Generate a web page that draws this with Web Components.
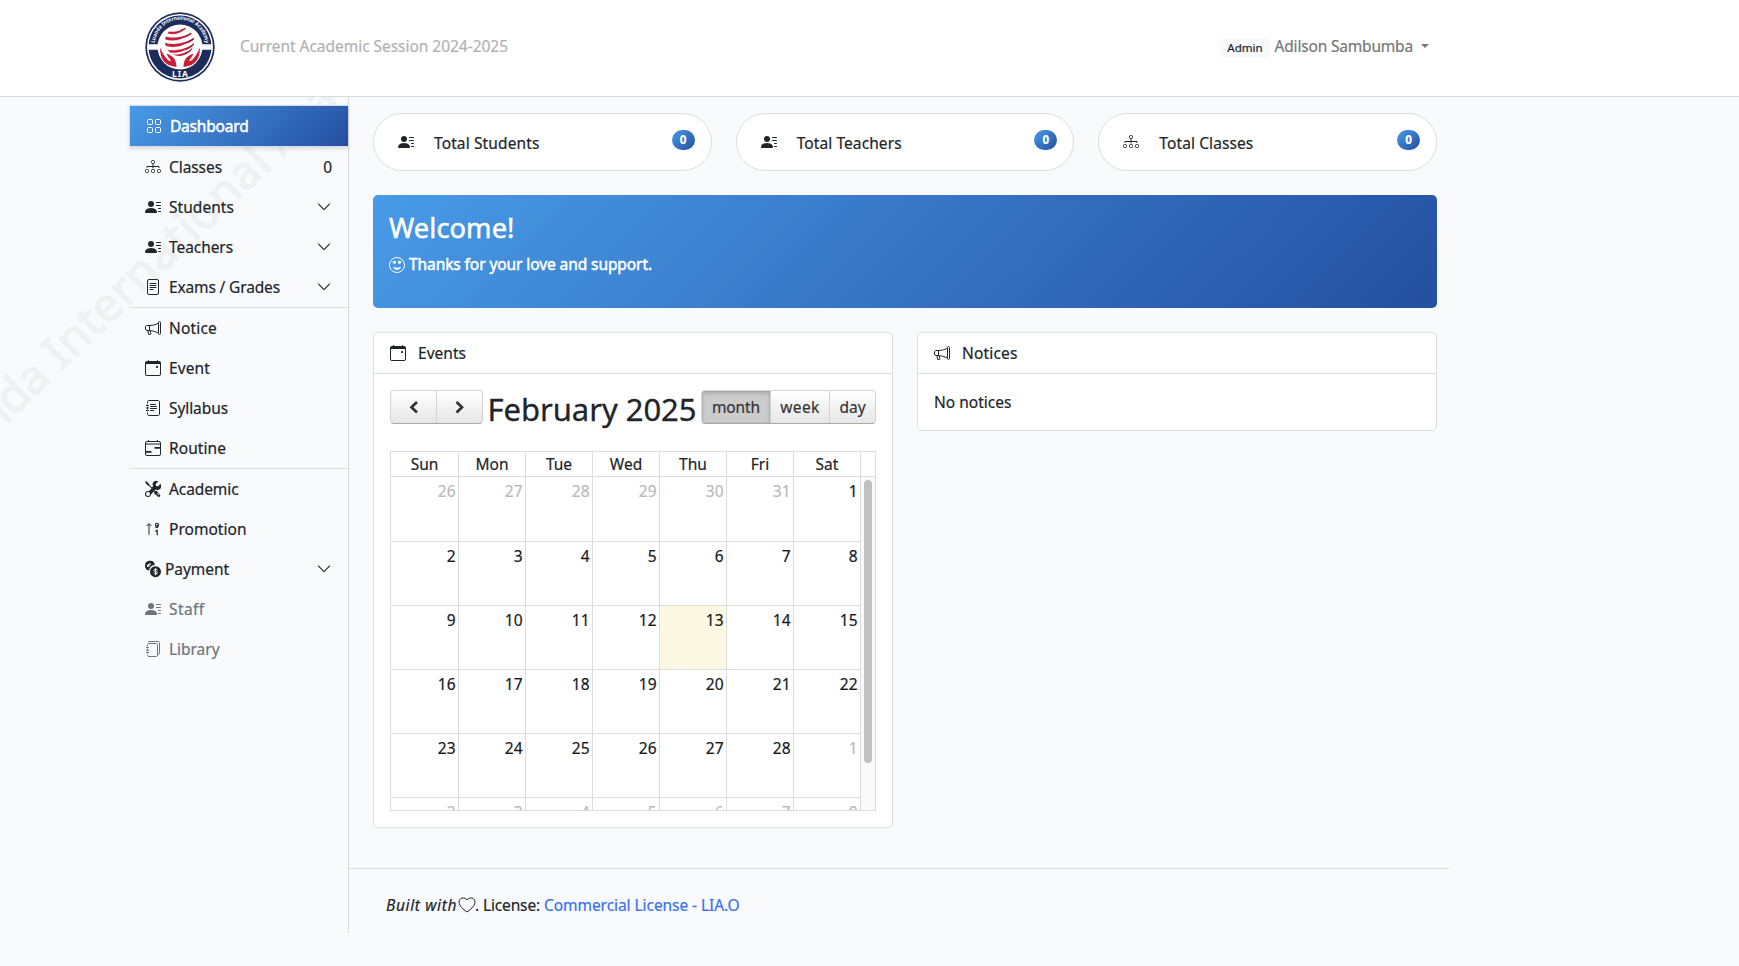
<!DOCTYPE html>
<html lang="en">
<head>
<meta charset="utf-8">
<title>Dashboard</title>
<style>
html,body{margin:0;height:100%}
body{background:#f8fafc;color:#212529;font:15.5px/24px "Noto Sans","Open Sans",sans-serif;overflow:hidden;-webkit-text-stroke:.2px}
</style>
</head>
<body>
<school-app></school-app>
<script>
const make=(name,html,after)=>customElements.define(name,class extends HTMLElement{
  constructor(){super();this.attachShadow({mode:'open'})}
  connectedCallback(){if(this.ready)return;this.ready=true;
    const t=document.createElement('template');
    t.innerHTML=typeof html==='function'?html(this):html;
    this.shadowRoot.append(t.content.cloneNode(true));after&&after(this)}
});
const s='fill="none" stroke="currentColor"';
const person='<path d="M11 5a3 3 0 1 1-6 0 3 3 0 0 1 6 0"  transform="translate(-2)"/><path d="M1 14s-1 0-1-1 1-4 6-4 6 3 6 4-1 1-1 1z"/><path d="M11 3.5a.5.5 0 0 1 .5-.5h4a.5.5 0 0 1 0 1h-4a.5.5 0 0 1-.5-.5m.5 2.500a.5.5 0 0 0 0 1h4a.5.5 0 0 0 0-1zm2 3a.5.5 0 0 0 0 1h2a.5.5 0 0 0 0-1zm0 3a.5.5 0 0 0 0 1h2a.5.5 0 0 0 0-1z"/>';
const icons={
grid:`<g ${s}><rect x="1.5" y="1.500" width="5" height="5" rx="1"/><rect x="9.500" y="1.500" width="5" height="5" rx="1"/><rect x="1.500" y="9.500" width="5" height="5" rx="1"/><rect x="9.500" y="9.500" width="5" height="5" rx="1"/></g>`,
diagram:`<g ${s}><rect x="6.500" y="1.500" width="3" height="3" rx="1"/><rect x=".5" y="10.500" width="3" height="3" rx="1"/><rect x="6.500" y="10.500" width="3" height="3" rx="1"/><rect x="12.500" y="10.500" width="3" height="3" rx="1"/><path d="M8 5v4M2 8.500V7.500h12v1" stroke-linecap="round" stroke-linejoin="round"/></g>`,
person,
file:`<g ${s}><rect x="2.500" y=".5" width="11" height="15" rx="1.500"/><path d="M5 4.500h6M5 6.500h6M5 8.500h6M5 10.500h3" stroke-linecap="round"/></g>`,
mega:`<g ${s} stroke-linejoin="round"><path d="M13.500 2.500c0-1.300 2-1.300 2 0v11c0 1.300-2 1.300-2 0zM13.500 3.100C11 4.700 8 5.400 5 5.500H2c-.9 0-1.500.6-1.500 1.500v2c0 .8.600 1.400 1.400 1.500h2.300c3 .2 6.200 1 9.300 2.600M4.500 5.500v5M2.800 10.500l.9 4h1.500c.6 0 .9-.4.700-1l-.8-2.900"/></g>`,
cal:`<path d="M11 6.500a.5.500 0 0 1 .5-.5h1a.5.500 0 0 1 .5.500v1a.5.500 0 0 1-.5.500h-1a.5.500 0 0 1-.5-.5z"/><path d="M3.500 0a.5.500 0 0 1 .5.500V1h8V.5a.5.500 0 0 1 1 0V1h1a2 2 0 0 1 2 2v11a2 2 0 0 1-2 2H2a2 2 0 0 1-2-2V3a2 2 0 0 1 2-2h1V.5a.5.500 0 0 1 .5-.5M1 4v10a1 1 0 0 0 1 1h12a1 1 0 0 0 1-1V4z"/>`,
journal:`<g ${s} stroke-linecap="round"><path d="M2.500 3V2c0-.9.600-1.500 1.500-1.500h9c.9 0 1.500.600 1.500 1.500v12c0 .9-.6 1.500-1.500 1.500H4c-.9 0-1.500-.6-1.500-1.500v-1M5.500 4.500h5M5.500 6.500h6M5.500 8.500h6M5.500 10.500h3M1.500 5.500h2M1.500 8h2M1.500 10.500h2M2.500 5v1M2.500 7.500v1M2.500 10v1"/></g>`,
range:`<g ${s}><rect x=".5" y="1.500" width="15" height="14" rx="1.500"/><path d="M3.500 0v1.500M12.500 0v1.500M.5 4h15"/><path d="M16 7.900H9.500M0 11.900h6.500" stroke-width="1.800"/></g>`,
tools:`<path d="M1 0 0 1l2.200 3.080a1 1 0 0 0 .810.420h.070a1 1 0 0 1 .710.290l2.680 2.680-2.620 2.660A3.100 3.100 0 0 0 3 10a3 3 0 1 0 2.830 4l.140-.420a1 1 0 0 1 .240-.380l2.770-2.840.500.500-.170.170a1 1 0 0 0 0 1.410l3.400 3.150a1.500 1.500 0 0 0 2.120-2.120l-3.150-3.400a1 1 0 0 0-1.410 0l-.27.270-.520-.530 1.370-1.380A3.500 3.500 0 0 0 16 4.500c0-.6-.15-1.150-.400-1.660L13.100 5.300l-2.200-.2-.200-2.200L13.200.4A3.500 3.500 0 0 0 8.200 5.100L6.900 6.400 4.290 3.790A1 1 0 0 1 4 3.090V3a1 1 0 0 0-.42-.81zM3 11a2 2 0 1 1 0 4 2 2 0 0 1 0-4m9.200 1 2.100 2.100-.5.500L11.700 12.500z" fill-rule="evenodd"/>`,
sort:`<g ${s} stroke-linecap="round" stroke-linejoin="round"><path d="M4 13.500V3M2 4.700 4 2.700l2 2"/><path stroke-width="1.200" d="M10.700 10.200 12.200 9.200v4.600M13.300 3.800c0-2-2.800-2-2.800 0s2.800 1.500 2.800 0v.7c0 2-1.900 2.600-2.700 1.500"/></g>`,
coins:`<path fill-rule="evenodd" d="M0 5a5 5 0 0 0 4.030 4.910 7 7 0 0 1 5.880-5.880A5 5 0 0 0 0 5m10.500.5a5.500 5.500 0 1 0 0 11 5.500 5.500 0 0 0 0-11" transform="translate(0 -.3)"/><path fill="none" stroke="#f8fafc" stroke-width="1" d="M12.500 9.200c-.7-1.400-3.700-1-3.700.2 0 1.600 3.700.8 3.700 2.400 0 1.400-3.200 1.600-3.900 0M10.600 7.200v7M6 3.200C4 2 2.900 3.700 2.900 5.500m-1-1.100 3.500-.8M2 5.600l2.800-.7"/>`,
book:`<g ${s} stroke-linecap="round"><path d="M4.500.500H13c.9 0 1.500.6 1.500 1.500v10c0 .9-.5 1.500-1.500 1.500M3.500.8 4.500.5"/><path d="M2.500 4.500V4c0-.9.600-1.500 1.500-1.500h7c.9 0 1.500.6 1.500 1.500v10c0 .9-.6 1.500-1.500 1.500H4c-.9 0-1.500-.6-1.500-1.500M1.500 6.500h2M1.500 9h2M1.500 11.500h2M2.500 6v1M2.500 8.500v1M2.500 11v1"/></g>`,
down:`<path ${s} stroke-width="1.200" stroke-linecap="round" stroke-linejoin="round" d="m1.500 4.500 6.500 6.500 6.500-6.500"/>`,
smile:`<circle cx="8" cy="8" r="7.500" ${s}/><path d="M6.800 4.100c-.9-.8-1.600.1-1.600.1s-1.300-.5-1.600.5c-.3 1.300 1.700 2.300 2.200 2.300.500-.2 2-1.900 1-2.900M9.200 4.100c.9-.8 1.600.1 1.600.1s1.300-.5 1.600.5c.3 1.300-1.700 2.300-2.200 2.300-.5-.2-2-1.900-1-2.900M4.300 9.900c2.300.8 5.100.8 7.400 0 .5-.2.500.3.200.700-1.900 3.100-5.900 3.100-7.800 0-.3-.5-.2-.9.200-.7"/>`,
heart:`<path ${s} d="M8 15C-7.300 4.900 3.300-2.800 8 2.800 12.700-2.800 23.300 4.900 8 15z"/>`,
prev:`<path ${s} stroke-width="2.700" d="M11 3 5.500 8.200 11 13.400"/>`,
next:`<path ${s} stroke-width="2.700" d="M4.500 3 10 8.200 4.500 13.400"/>`
};
make('ui-icon',el=>`<style>:host{display:block;width:16px;height:16px;flex:none}svg{display:block;overflow:visible;width:100%;height:100%}</style><svg viewBox="0 0 16 16" fill="currentColor">${icons[el.getAttribute('name')]}</svg>`);

make('school-logo',`<style>:host{display:block;width:70px;height:70px}svg{display:block;overflow:visible}</style>
<svg width="70" height="70" viewBox="0 0 70 70"><defs><path id="arc" d="M9.700 33A25.300 25.300 0 0 1 60.300 33"/><clipPath id="c"><circle cx="34.500" cy="29.500" r="14.500"/></clipPath></defs>
<circle cx="35" cy="35" r="34.700" fill="#1d2d5b"/><circle cx="35" cy="35" r="33" fill="#fff"/><circle cx="35" cy="35" r="31.500" fill="#1d2d5b"/>
<circle cx="35" cy="35" r="22.500" fill="#fff"/><path d="M3 32.300h12l1 5.500H3zM67 32.300H55l-1 5.500h13z" fill="#fff"/>
<g clip-path="url(#c)" fill="#c9203a"><path d="M19 17c6 5 17 3 23-3-4 7-14 11-23 6zM18 23.500c8 4 23 2 31-5-6 8-21 13-31 8zM18 30c8 4 24 2 33-6-7 9-23 14-33 9zM19 36.500c8 4 24 1 32-7-7 10-22 14-32 9.500zM25 42c8 2 17-1 24-7-6 8-15 12-24 9z"/></g>
<g clip-path="url(#c)" fill="none" stroke="#8e1d2e" stroke-width="1.300"><path d="M36 18.500q5-1.500 7-5M40 24.700q6-2 9-6M41 31q7-2 10-7M41 37.300q6-2 10-8M40 42q5-2 8-6"/></g>
<path d="M15 35.500c0 12 5 18.500 16.500 19.500 0-7-3-11-10-13.500 1 3 3 5 4.500 7-1 1-3 0-4-1.500-3-3-5-7-7-11.500zM55 35.500c0 12-5 18.500-16.500 19.500 0-7 3-11 10-13.500-1 3-3 5-4.500 7 1 1 3 0 4-1.500 3-3 5-7 7-11.500z" fill="#c9203a"/>
<text font-family="Noto Sans,sans-serif" font-size="5.300" font-weight="700" fill="#fff" stroke="none"><textPath href="#arc" startOffset="2" textLength="75" lengthAdjust="spacingAndGlyphs">Luanda International Academy</textPath></text>
<text x="35.500" y="65" text-anchor="middle" font-family="Noto Sans,sans-serif" font-size="8.500" font-weight="700" letter-spacing="1" fill="#fff">LIA</text></svg>`);

make('app-header',`<style>:host{display:flex;box-sizing:border-box;height:97px;background:#fff;border-bottom:1px solid #d8dadd;padding:12px 310px 0 145px;position:relative}
.session{color:#b2b2b2;margin:22px 0 0 25px}.user{display:flex;margin:22px 0 0 auto;height:24px;align-items:center;color:#777;gap:4px}
.role{background:#f8f9fa;border-radius:5px;color:#212529;font-size:11.600px;line-height:20px;height:20px;width:51px;text-align:center;margin-top:4px}
.caret{border:4.500px solid transparent;border-top-color:#777;border-bottom:0;margin:0 0 1px 4px}</style>
<school-logo></school-logo><div class="session"><fit-text w="268">Current Academic Session 2024-2025</fit-text></div>
<div class="user"><span class="role"><fit-text w="35.500">Admin</fit-text></span><span class="name"><fit-text w="138.500">Adilson Sambumba</fit-text></span><i class="caret"></i></div>`);

make('nav-item',el=>`<style>:host{display:flex;height:40px;align-items:center;padding:0 16px;gap:${el.getAttribute('gap')||8}px}
:host([muted]){color:#6c757d}
:host([active]){color:#fff;background:linear-gradient(135deg,#489be7,#254fa1);border:1px solid #d9dde3;border-right:0;box-shadow:0 2px 4px rgba(0,0,0,.12);-webkit-text-stroke:.5px}
:host([line]){border-bottom:1px solid #dcdfe2}ui-icon{-webkit-text-stroke:0}.end{margin-left:auto;display:flex}.end ui-icon{width:14px;height:14px;margin-right:1px}</style>
<ui-icon name="${el.getAttribute('icon')}"></ui-icon><fit-text w="${el.getAttribute('w')}">${el.getAttribute('label')}</fit-text>
<span class="end">${el.hasAttribute('menu')?'<ui-icon name="down"></ui-icon>':''}<slot></slot></span>`);

const nav=[['grid','Dashboard',78.500,'active'],['diagram','Classes',53],['person','Students',65],['person','Teachers',64],['file','Exams / Grades',111,'menu line'],
['mega','Notice',48],['cal','Event',41],['journal','Syllabus',59],['range','Routine',57,'line'],['tools','Academic',69.500],['sort','Promotion',77.500],['coins','Payment',64,'menu gap="4"'],['person','Staff',35.500,'muted'],['book','Library',50.500,'muted']];
nav[2][3]=nav[3][3]='menu';
make('side-nav',`<style>:host{display:block;box-sizing:border-box;width:220px;padding-top:8px;border-right:1px solid #d8dadd}</style>`+
nav.map(([i,l,w,a=''])=>`<nav-item icon="${i}" label="${l}" w="${w}" ${a}>${l==='Classes'?'0':''}</nav-item>`).join(''));

make('stat-card',el=>`<style>:host{display:flex;box-sizing:border-box;flex:1;height:58px;background:#fff;border:1px solid #dcdedf;border-radius:29px;padding:0 16px 0 24px;align-items:center}
fit-text{margin:1px 0 0 20px}ui-icon{margin-top:-1px}.badge{margin:-4px 0 0 auto;width:23px;height:20px;border-radius:10px;background:linear-gradient(135deg,#489be7,#254fa1);color:#fff;font:700 11.600px/20px "Noto Sans",sans-serif;text-align:center}</style>
<ui-icon name="${el.getAttribute('icon')}"></ui-icon><fit-text w="${el.getAttribute('w')}"><slot></slot></fit-text><span class="badge">0</span>`);

make('welcome-banner',`<style>:host{display:block;box-sizing:border-box;height:113px;margin-top:24px;padding:16px;border-radius:5px;color:#fff;background:linear-gradient(135deg,#489be7,#254fa1);-webkit-text-stroke:.5px}
h3{margin:0;font-size:27.200px;line-height:33px;height:33.600px;font-weight:400}div{display:flex;gap:4px;margin-top:7px}ui-icon{margin-top:5px}</style>
<h3><fit-text w="125.500">Welcome!</fit-text></h3><div><ui-icon name="smile"></ui-icon><fit-text w="243">Thanks for your love and support.</fit-text></div>`);

make('panel-card',el=>`<style>:host{display:block;box-sizing:border-box;flex:1;border:1px solid #dcdedf;border-radius:5px;background:#fff}
header{display:flex;height:40px;align-items:center;gap:12px;padding:0 16px;border-bottom:1px solid #dcdedf}.body{padding:16px}</style>
<header><ui-icon name="${el.getAttribute('icon')}"></ui-icon><fit-text w="${el.getAttribute('w')}">${el.getAttribute('label')}</fit-text></header><div class="body"><slot></slot></div>`);

const days=[26,27,28,29,30,31,1,...Array.from({length:27},(_,i)=>i+2),1,2,3,4,5,6,7,8];
make('event-calendar',`<style>:host{display:block}
.bar{display:flex;height:45px;align-items:flex-start;justify-content:space-between}
.group{display:flex;border:1px solid #d4d4d4;border-bottom-color:#a9a9a9;border-radius:4px;overflow:hidden;background:linear-gradient(#fff,#e6e6e6);height:32px;color:#333}
.group span{box-sizing:border-box;height:32px;display:flex;align-items:center;justify-content:center;border-left:1px solid #d2d2d2;line-height:24px}
.group span:first-child{border-left:0}.nav span{width:46px}.nav span:first-child{width:45px}.group .on{background:#ccc;box-shadow:inset 0 2px 4px rgba(0,0,0,.18),inset 0 0 1px #777;width:68px}
h2{margin:0;font-size:31px;line-height:39px;font-weight:400;-webkit-text-stroke:.3px}
.head{display:grid;grid-template-columns:67px repeat(6,67px) 1fr;border:1px solid #dcdcdc;margin-top:16px;height:24px;line-height:24px;text-align:center}
.head span+span,.head i{border-left:1px solid #dcdcdc}
.view{display:flex;overflow:hidden;border:1px solid #dcdcdc;border-top:0;box-sizing:border-box;height:334px}
.days{display:grid;grid-template-columns:68px repeat(6,67px);grid-template-rows:65px repeat(5,64px);flex:none}
.days span{box-sizing:border-box;border-right:1px solid #dcdcdc;border-bottom:1px solid #dcdcdc;text-align:right;padding:2px 2.500px 0 0;color:#16191c}
.days .out{color:#b9b9b9}.days .today{background:#fcf8e3}
.scroll{flex:1;background:#fafafa;padding:3px 0 0 3px}.scroll i{display:block;width:8px;height:283px;border-radius:4px;background:#c1c1c1}</style>
<div class="bar"><div class="group nav"><span><ui-icon name="prev"></ui-icon></span><span><ui-icon name="next"></ui-icon></span></div>
<h2><fit-text w="209">February 2025</fit-text></h2>
<div class="group"><span class="on"><fit-text w="48">month</fit-text></span><span style="width:59px"><fit-text w="39.500">week</fit-text></span><span style="width:46px"><fit-text w="26">day</fit-text></span></div></div>
<div class="head">${['Sun','Mon','Tue','Wed','Thu','Fri','Sat'].map(d=>`<span>${d}</span>`).join('')}<i></i></div>
<div class="view"><div class="days">${days.map((d,i)=>`<span class="${i<6||i>33?'out':i===18?'today':''}">${d}</span>`).join('')}</div><div class="scroll"><i></i></div></div>`);

make('app-footer',`<style>:host{display:flex;box-sizing:border-box;border-top:1px solid #d8dadd;margin:40px -12px 0 -24px;padding:24px 36px 0 37px;height:65px}
ui-icon{margin:4px 0 0 2px}a{color:#3870f0;margin-left:4px}</style>
<em><fit-text w="71">Built with</fit-text></em><ui-icon name="heart"></ui-icon><fit-text w="65">. License:</fit-text><a><fit-text w="195.500">Commercial License - LIA.O</fit-text></a>`);

make('school-watermark',`<style>:host{position:absolute;left:0;top:97px;pointer-events:none}svg{display:block}</style>
<svg width="460" height="500" viewBox="0 97 460 500"><g transform="translate(64.500 368) rotate(-44)" fill="#eff0f0" stroke="#eff0f0" stroke-width="1.200" font-family="Noto Sans,sans-serif" font-size="46.500">
<text x="-17" text-anchor="end" textLength="159">Luanda</text><text x="-4" textLength="294">International</text><text x="303" textLength="205">Academy</text></g></svg>`);

make('school-app',`<style>:host{display:block;height:966px;position:relative;overflow:hidden}
.layout{display:flex;position:relative;padding-left:129px;width:1308px;height:836px}
main{flex:1;padding:16px 0 0 24px;min-width:0}.row{display:flex;gap:24px;align-items:flex-start}.panels{margin-top:24px}</style>
<school-watermark></school-watermark><app-header></app-header>
<div class="layout"><side-nav></side-nav><main>
<div class="row"><stat-card icon="person" w="105.500">Total Students</stat-card><stat-card icon="person" w="105">Total Teachers</stat-card><stat-card icon="diagram" w="94">Total Classes</stat-card></div>
<welcome-banner></welcome-banner>
<div class="row panels"><panel-card icon="cal" label="Events" w="48"><event-calendar></event-calendar></panel-card>
<panel-card icon="mega" label="Notices" w="55.500"><fit-text w="77.500">No notices</fit-text></panel-card></div>
<app-footer></app-footer></main></div>`);

/* Inline label whose tracking is adjusted to occupy a set width. */
make('fit-text','<style>:host{display:inline-block;white-space:nowrap}</style><slot></slot>',el=>{
  const w=+el.getAttribute('w');
  const slot=el.querySelector('slot');
  const text=slot?slot.assignedNodes().map(n=>n.textContent).join(''):el.textContent;
  el.style.letterSpacing=(w-el.getBoundingClientRect().width)/text.trim().length+'px';
});
</script>
</body>
</html>
